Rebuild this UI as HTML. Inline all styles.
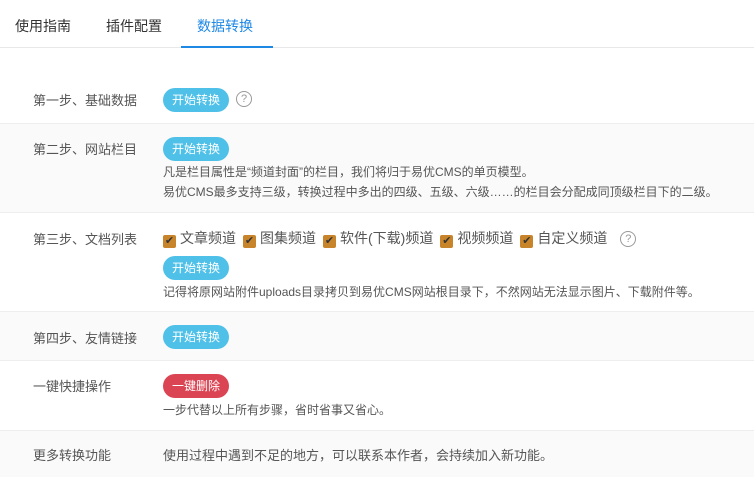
<!DOCTYPE html>
<html><head><meta charset="utf-8"><style>
*{margin:0;padding:0;box-sizing:border-box}
body{width:754px;height:486px;background:#fff;font-family:"Liberation Sans","Noto Sans CJK SC",sans-serif;color:#555;overflow:hidden;position:relative}
.tabs{height:48px;border-bottom:1px solid #e8e8e8;position:relative}
.tab{position:absolute;top:16px;font-size:14px;color:#333}
.tab.on{color:#1e88e5}
.ul{position:absolute;left:181px;top:46px;width:92px;height:2px;background:#1e88e5}
.row{position:absolute;left:0;width:754px;border-bottom:1px solid #eee}
.g{background:#fafafa}
.lb{position:absolute;left:33px;font-size:13px;color:#555}
.btn{position:absolute;left:163px;width:66px;height:24px;border-radius:12px;background:#4fc0e8;color:#fff;font-size:12px;line-height:24px;text-align:center}
.red{background:#da4453}
.t{position:absolute;left:163px;font-size:12px;color:#555;white-space:nowrap}
.q{display:inline-block;width:16px;height:16px;border:1px solid #999;border-radius:50%;font-size:11px;line-height:14px;text-align:center;color:#999;vertical-align:middle}
.cb{display:inline-block;width:13px;height:13px;background:#c8842a;border-radius:2px;color:#333;font-size:11px;line-height:13px;text-align:center;vertical-align:-1px;margin-right:4px}
.chk{position:absolute;left:163px;top:228px;font-size:14px;color:#555;white-space:nowrap}
.chk span.i{margin-right:7px}
</style></head><body>
<div class="tabs">
<span class="tab" style="left:15px">使用指南</span>
<span class="tab" style="left:106px">插件配置</span>
<span class="tab on" style="left:197px">数据转换</span>
<div class="ul"></div>
</div>
<div class="row" style="top:78px;height:46px"></div>
<div class="lb" style="top:90px">第一步、基础数据</div>
<div class="btn" style="top:88px">开始转换</div>
<span class="q" style="position:absolute;left:236px;top:91px">?</span>

<div class="row g" style="top:124px;height:89px"></div>
<div class="lb" style="top:139px">第二步、网站栏目</div>
<div class="btn" style="top:137px">开始转换</div>
<div class="t" style="top:163px">凡是栏目属性是“频道封面”的栏目，我们将归于易优CMS的单页模型。</div>
<div class="t" style="top:183px">易优CMS最多支持三级，转换过程中多出的四级、五级、六级……的栏目会分配成同顶级栏目下的二级。</div>

<div class="row" style="top:213px;height:99px"></div>
<div class="lb" style="top:229px">第三步、文档列表</div>
<div class="chk"><span class="cb">✔</span><span class="i">文章频道</span><span class="cb">✔</span><span class="i">图集频道</span><span class="cb">✔</span><span class="i">软件(下载)频道</span><span class="cb">✔</span><span class="i">视频频道</span><span class="cb">✔</span><span class="i">自定义频道</span><span class="q" style="margin-left:6px">?</span></div>
<div class="btn" style="top:256px">开始转换</div>
<div class="t" style="top:283px">记得将原网站附件uploads目录拷贝到易优CMS网站根目录下，不然网站无法显示图片、下载附件等。</div>

<div class="row g" style="top:312px;height:49px"></div>
<div class="lb" style="top:328px">第四步、友情链接</div>
<div class="btn" style="top:325px">开始转换</div>

<div class="row" style="top:361px;height:70px"></div>
<div class="lb" style="top:376px">一键快捷操作</div>
<div class="btn red" style="top:374px">一键删除</div>
<div class="t" style="top:401px">一步代替以上所有步骤，省时省事又省心。</div>

<div class="row g" style="top:431px;height:46px;border-bottom:none"></div>
<div class="lb" style="top:445px">更多转换功能</div>
<div class="t" style="top:445px;font-size:13px">使用过程中遇到不足的地方，可以联系本作者，会持续加入新功能。</div>
</body></html>
